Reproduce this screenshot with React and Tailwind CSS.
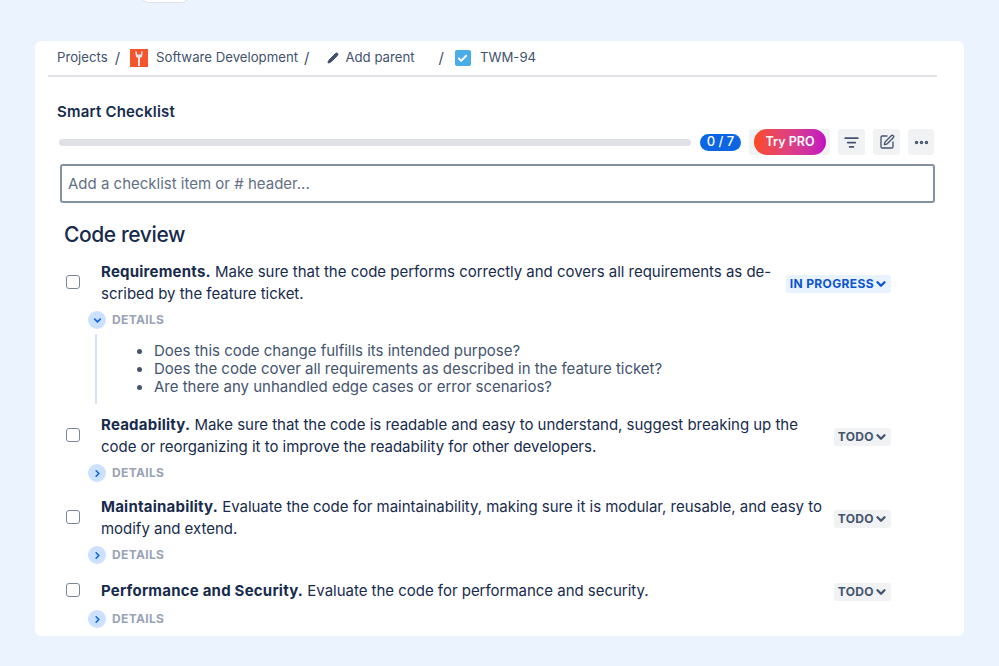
import React from 'react';
import { ChevronDown, ChevronRight, Ellipsis, ListFilter, SquarePen, Pencil, Check } from 'lucide-react';

const items = [
  {
    title: 'Requirements.',
    lines: ['Make sure that the code performs correctly and covers all requirements as de-', 'scribed by the feature ticket.'],
    status: 'IN PROGRESS',
    open: true,
    rowClass: 'mt-[12px] h-[44px]',
  },
  {
    title: 'Readability.',
    lines: ['Make sure that the code is readable and easy to understand, suggest breaking up the', 'code or reorganizing it to improve the readability for other developers.'],
    status: 'TODO',
    rowClass: 'mt-[10px] h-[44px]',
  },
  {
    title: 'Maintainability.',
    lines: ['Evaluate the code for maintainability, making sure it is modular, reusable, and easy to', 'modify and extend.'],
    status: 'TODO',
    rowClass: 'mt-[14px] h-[44px]',
  },
  {
    title: 'Performance and Security.',
    lines: ['Evaluate the code for performance and security.'],
    status: 'TODO',
    rowClass: 'mt-[16px] h-[22px]',
    single: true,
  },
];

const details = [
  'Does this code change fulfills its intended purpose?',
  'Does the code cover all requirements as described in the feature ticket?',
  'Are there any unhandled edge cases or error scenarios?',
];

const Sep = ({ className = '' }) => <span className={`text-[#42526e] text-[15px] ${className}`}>/</span>;

const StatusBadge = ({ status }) => {
  const inProgress = status === 'IN PROGRESS';
  return (
    <div className={`flex shrink-0 items-center h-[18px] mt-[2px] rounded-[3px] pl-[4px] pr-[3px] text-[12px] font-bold tracking-[0.38px] whitespace-nowrap ${inProgress ? 'bg-[#e9f2ff] text-[#0c55cf]' : 'bg-[#f1f2f4] text-[#44546f]'}`}>
      {status}
      <ChevronDown size={14} strokeWidth={4} />
    </div>
  );
};

const Item = ({ item }) => (
  <div>
    <div className={`flex items-center ${item.rowClass}`}>
      <div className="w-[14px] h-[14px] ml-[31px] mr-[21px] mt-[-2px] shrink-0 rounded-[3px] border-[1.5px] border-[#7a869a] bg-white" />
      <div className="w-[732px] shrink-0 text-[15px] leading-[22px] tracking-[-0.02px] text-[#172b4d] whitespace-nowrap">
        <div>
          <span className="font-bold tracking-[0.22px]">{item.title}</span> {item.lines[0]}
        </div>
        {item.lines[1] && <div>{item.lines[1]}</div>}
      </div>
      <div className="w-[58px] shrink-0 flex justify-end">
        <StatusBadge status={item.status} />
      </div>
    </div>
    <div className={`flex items-center h-[18px] ml-[53px] ${item.single ? 'mt-[8px]' : 'mt-[6px]'}`}>
      <div className="w-[18px] h-[18px] rounded-full bg-[#cce0ff] flex items-center justify-center text-[#0c66e4]">
        {item.open ? <ChevronDown size={11} strokeWidth={3.5} /> : <ChevronRight size={11} strokeWidth={3.5} />}
      </div>
      <span className="ml-[6px] text-[12px] font-bold tracking-[0.35px] text-[#9aa3b5]">DETAILS</span>
    </div>
    {item.open && (
      <div className="ml-[60px] mt-[5px] border-l-2 border-[#d5e3fb] h-[70px] pl-[41px] pt-[8px]">
        {details.map((d) => (
          <div key={d} className="flex items-center h-[18px] text-[15px] tracking-[-0.01px] text-[#44546f] whitespace-nowrap">
            <span className="w-[5px] h-[5px] rounded-full bg-[#44546f] mr-[12px] ml-[-1px]" />
            {d}
          </div>
        ))}
      </div>
    )}
  </div>
);

export default function App() {
  return (
    <div className="h-[666px] overflow-hidden bg-[#ebf3fe] font-['Inter',sans-serif]">
      <div className="ml-[140px] mt-[-7px] w-[50px] h-[10px] rounded-b-[9px] bg-white border border-t-0 border-[#dfe1e6]" />
      <div className="mx-[35px] mt-[38px] w-[929px] h-[595px] rounded-[6px] bg-white overflow-hidden">
        <div className="mx-[13px] w-[889px] h-[36px] border-b-2 border-[#dfe1e6] pl-[9px] flex items-center text-[13.2px] text-[#42526e] whitespace-nowrap">
          <span>Projects</span>
          <Sep className="ml-[7px]" />
          <div className="ml-[10px] w-[18px] h-[18px] bg-[#f4552d] flex items-center justify-center">
            <svg width="12" height="16" viewBox="0 0 12 16">
              <path d="M2.5 1v3.5A3.5 3.5 0 0 0 5 7.9V16h2V7.9A3.5 3.5 0 0 0 9.5 4.5V1L8 2v2.6H4V2Z" fill="#e3e5ea" />
            </svg>
          </div>
          <span className="ml-[8px]">Software Development</span>
          <Sep className="ml-[6px]" />
          <Pencil className="ml-[18px] text-[#42526e]" size={12} fill="#42526e" />
          <span className="ml-[6px]">Add parent</span>
          <Sep className="ml-[24px]" />
          <div className="ml-[11px] w-[16px] h-[16px] rounded-[2px] bg-[#4bade8] flex items-center justify-center text-white">
            <Check size={11} strokeWidth={4} />
          </div>
          <span className="ml-[9px]">TWM-94</span>
        </div>

        <div className="ml-[22px] mt-[25px] text-[15px] leading-[20px] font-semibold tracking-[0.2px] text-[#172b4d]">Smart Checklist</div>

        <div className="flex items-center ml-[24px] mt-[7px] h-[26px]">
          <div className="w-[632px] h-[7px] rounded-full bg-[#dfe1e6]" />
          <div className="ml-[9px] w-[41px] h-[17px] rounded-full bg-[#0c66e4] text-white text-[13px] font-medium flex items-center justify-center">0 / 7</div>
          <div className="ml-[8px] w-[81px] h-[26px] rounded-[3px] bg-[#f1f2f4] flex items-center">
            <div className="ml-[5px] w-[72px] h-[26px] rounded-full bg-gradient-to-r from-[#fc4a14] to-[#c209c1] text-white text-[12.5px] font-semibold flex items-center justify-center">Try PRO</div>
          </div>
          <div className="ml-[8px] w-[27px] h-[26px] rounded-[3px] bg-[#f1f2f4] flex items-center justify-center text-[#44546f]">
            <ListFilter size={15} strokeWidth={2.8} />
          </div>
          <div className="ml-[8px] w-[27px] h-[26px] rounded-[3px] bg-[#f1f2f4] flex items-center justify-center text-[#44546f]">
            <SquarePen size={16} strokeWidth={2} />
          </div>
          <div className="ml-[8px] w-[26px] h-[26px] rounded-[3px] bg-[#f1f2f4] flex items-center justify-center text-[#44546f]">
            <Ellipsis size={17} strokeWidth={3} />
          </div>
        </div>

        <div className="ml-[25px] mt-[9px] w-[875px] h-[39px] rounded-[3px] border-2 border-[#8590a2] flex items-center pl-[6px] pt-[1px] text-[15px] text-[#626f86]">
          Add a checklist item or # header...
        </div>

        <div className="ml-[29px] mt-[18px] text-[21px] leading-[28px] font-medium tracking-[-0.4px] text-[#172b4d]">Code review</div>

        {items.map((item) => (
          <Item key={item.title} item={item} />
        ))}
      </div>
    </div>
  );
}
